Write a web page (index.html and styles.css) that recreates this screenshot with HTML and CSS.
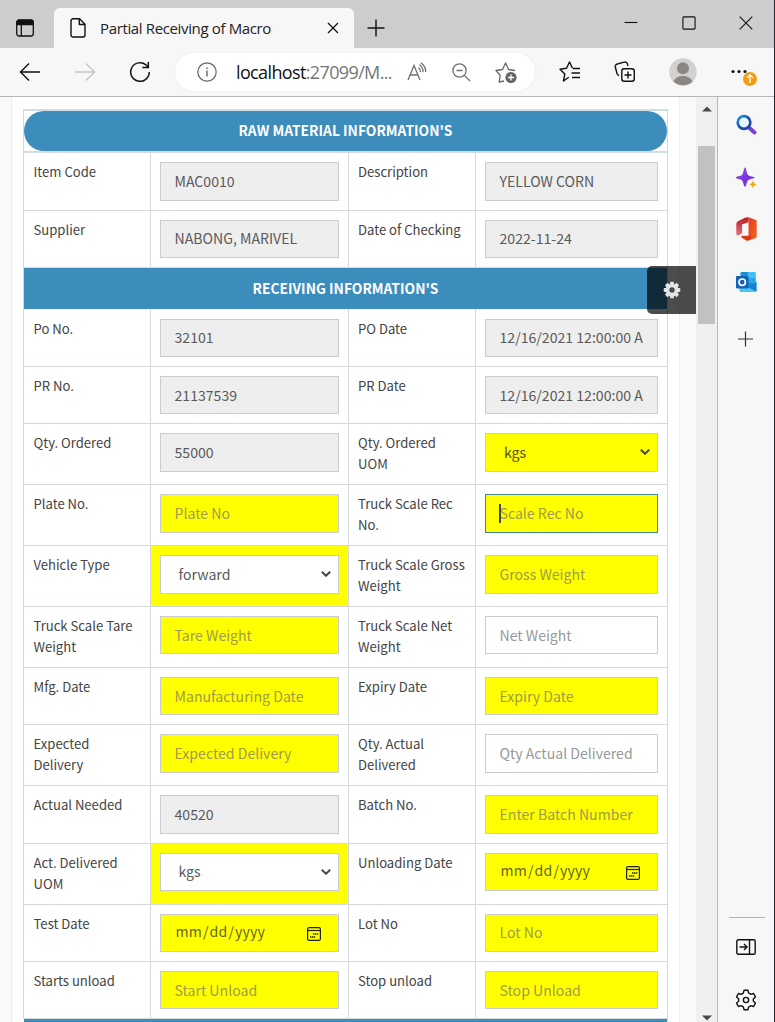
FILE: index.html
```html
<!DOCTYPE html>
<html lang="en">
<head>
<meta charset="utf-8">
<title>Partial Receiving of Macro</title>
<link rel="stylesheet" href="styles.css">
</head>
<body>
<div class="window">
  <header class="tabbar">
    <svg class="tabmenu" width="20" height="20" viewBox="0 0 20 20" fill="none" stroke="#111" stroke-width="1.3"><rect x="1.7" y="2" width="16.6" height="16" rx="2.5"/><path d="M2 4.5a2 2 0 0 1 2-2h12a2 2 0 0 1 2 2v2H2z" fill="#111"/><path d="M6.3 7v11"/></svg>
    <div class="tab">
      <svg width="16" height="20" viewBox="0 0 16 20" fill="none" stroke="#111" stroke-width="1.4" stroke-linejoin="round"><path d="M3 .8h6.5L15 6.3V17a2 2 0 0 1-2 2H3a2 2 0 0 1-2-2V2.8a2 2 0 0 1 2-2z"/><path d="M9.3 1v5.5H15"/></svg>
      <span class="tabtitle">Partial Receiving of Macro</span>
      <svg class="tabclose" width="12" height="12" viewBox="0 0 12 12" stroke="#111" stroke-width="1.3"><path d="M1 1l10 10M11 1L1 11"/></svg>
    </div>
    <svg class="newtab" width="18" height="18" viewBox="0 0 18 18" stroke="#111" stroke-width="1.4"><path d="M9 .5v17M.5 9h17"/></svg>
    <div class="winbtns">
      <svg width="14" height="14" viewBox="0 0 14 14" stroke="#111" stroke-width="1.1"><path d="M.5 6.5h13"/></svg>
      <svg width="14" height="14" viewBox="0 0 14 14" fill="none" stroke="#111" stroke-width="1.1"><rect x=".9" y=".9" width="12.2" height="12.2" rx="1"/></svg>
      <svg width="14" height="14" viewBox="0 0 14 14" stroke="#111" stroke-width="1.1"><path d="M.7.7l12.6 12.6M13.3.7L.7 13.3"/></svg>
    </div>
  </header>
  <div class="toolbar">
    <svg width="22" height="20" viewBox="0 0 22 20" fill="none" stroke="#111" stroke-width="1.4"><path d="M21 10H1.500M10 1.500L1.500 10l8.500 8.500"/></svg>
    <svg class="fwd" width="22" height="20" viewBox="0 0 22 20" fill="none" stroke="#c8c8c8" stroke-width="1.4"><path d="M1 10h19.500M12 1.500L20.500 10 12 18.500"/></svg>
    <svg class="reload" width="22" height="22" viewBox="0 0 22 22" fill="none" stroke="#111" stroke-width="1.5"><path d="M20.300 11a9.300 9.300 0 1 1-3.200-7L19 6"/><path d="M19.300 1v5.500h-6"/></svg>
    <div class="address">
      <svg width="20" height="20" viewBox="0 0 20 20" fill="none" stroke="#666" stroke-width="1.200"><circle cx="10" cy="10" r="9.200"/><path d="M10 8.500v6M10 5.500v1.600" stroke-width="1.400"/></svg>
      <span class="url">localhost<span class="dim">:27099/M...</span></span>
      <svg class="read" width="20" height="20" viewBox="0 0 20 20" fill="none" stroke="#707070" stroke-width="1.300"><path d="M1 18L7 3.500 13 18M3 13h8M11.500 5.500a6 6 0 0 1 2 4.500M12.500 2.500a9 9 0 0 1 3.500 7.500M14 .7a12 12 0 0 1 4.800 9.300"/></svg>
      <svg class="zoomout" width="19" height="19" viewBox="0 0 19 19" fill="none" stroke="#707070" stroke-width="1.300"><circle cx="7.500" cy="7.500" r="6.600"/><path d="M12.500 12.500L18 18M4.500 7.500h6"/></svg>
      <svg class="fav" width="23" height="23" viewBox="0 0 23 23" fill="none" stroke="#666" stroke-width="1.300" stroke-linejoin="round"><path d="M9 20l-4.800 1 1-6.800L1 9.500l6.500-1L10.600 2l3 6.500 6.400 1"/><circle cx="16" cy="16.500" r="5.600" fill="#666" stroke="none"/><path d="M16 13.500v6M13 16.500h6" stroke="#fff"/></svg>
    </div>
    <svg class="favs" width="22" height="22" viewBox="0 0 22 22" fill="none" stroke="#111" stroke-width="1.400" stroke-linejoin="round"><path d="M9.800 16.200L4.500 20l1.300-7L1 8.300l6.500-1L10.500 1l3 6.300M14 7.500h7M12.500 12H21M13 16.500h8"/></svg>
    <svg class="coll" width="22" height="22" viewBox="0 0 22 22" fill="none" stroke="#111" stroke-width="1.400"><rect x="7.800" y="7.800" width="12.500" height="12.500" rx="2.500"/><path d="M14 10.500v7M10.500 14h7M5 14.500a3 3 0 0 1-2-2L1.300 6a2.500 2.500 0 0 1 2-3L10 1.200a2.500 2.500 0 0 1 3.500 2L14 5"/></svg>
    <svg class="avatar" width="28" height="28" viewBox="0 0 28 28"><circle cx="14" cy="14" r="13.700" fill="#d3d1cf"/><circle cx="14" cy="10.300" r="6" fill="#898684"/><path d="M4.500 23.500C6 19.800 10 18 14 18s8 1.800 9.500 5.500A13.700 13.700 0 0 1 4.500 23.500z" fill="#898684"/></svg>
    <svg class="more" width="28" height="28" viewBox="0 0 28 28"><g fill="#111"><circle cx="3" cy="7.500" r="1.600"/><circle cx="9" cy="7.500" r="1.600"/><circle cx="15" cy="7.500" r="1.600"/></g><circle cx="20" cy="15" r="7" fill="#f09d13"/><path d="M20 19v-8M17 13.800l3-3 3 3" fill="none" stroke="#fff" stroke-width="1.300"/></svg>
  </div>
  <div class="body">
    <main class="page">
      <div class="panel">
        <div class="form">
          <div class="capwrap"><div class="caption">RAW MATERIAL INFORMATION'S</div></div>
          <div class="row h58 big"><div class="label">Item Code</div><div class="cell"><div class="field ro">MAC0010</div></div><div class="label">Description</div><div class="cell"><div class="field ro">YELLOW CORN</div></div></div>
          <div class="row"><div class="label">Supplier</div><div class="cell"><div class="field ro">NABONG, MARIVEL</div></div><div class="label">Date of Checking</div><div class="cell"><div class="field ro">2022-11-24</div></div></div>
          <div class="section">RECEIVING INFORMATION'S</div>
          <div class="row h58 first"><div class="label">Po No.</div><div class="cell"><div class="field ro">32101</div></div><div class="label">PO Date</div><div class="cell"><div class="field ro">12/16/2021 12:00:00 A</div></div></div>
          <div class="row low"><div class="label">PR No.</div><div class="cell"><div class="field ro">21137539</div></div><div class="label">PR Date</div><div class="cell"><div class="field ro">12/16/2021 12:00:00 A</div></div></div>
          <div class="row h61 big"><div class="label">Qty. Ordered</div><div class="cell"><div class="field ro">55000</div></div><div class="label">Qty. Ordered<br>UOM</div><div class="cell"><div class="field req select">kgs<svg class="chev" viewBox="0 0 10 6"><path d="M.8.8L5 4.800 9.200.8"/></svg></div></div></div>
          <div class="row h61 big"><div class="label">Plate No.</div><div class="cell"><div class="field req ph">Plate No</div></div><div class="label">Truck Scale Rec<br>No.</div><div class="cell"><div class="field req ph focus"><i class="caret"></i>Scale Rec No</div></div></div>
          <div class="row h61 big"><div class="label">Vehicle Type</div><div class="cell hot"><div class="field select">forward<svg class="chev" viewBox="0 0 10 6"><path d="M.8.8L5 4.800 9.200.8"/></svg></div></div><div class="label">Truck Scale Gross<br>Weight</div><div class="cell"><div class="field req ph">Gross Weight</div></div></div>
          <div class="row h61 low"><div class="label">Truck Scale Tare<br>Weight</div><div class="cell"><div class="field req ph">Tare Weight</div></div><div class="label">Truck Scale Net<br>Weight</div><div class="cell"><div class="field ph">Net Weight</div></div></div>
          <div class="row low"><div class="label">Mfg. Date</div><div class="cell"><div class="field req ph">Manufacturing Date</div></div><div class="label">Expiry Date</div><div class="cell"><div class="field req ph">Expiry Date</div></div></div>
          <div class="row h61 big"><div class="label">Expected<br>Delivery</div><div class="cell"><div class="field req ph">Expected Delivery</div></div><div class="label">Qty. Actual<br>Delivered</div><div class="cell"><div class="field ph">Qty Actual Delivered</div></div></div>
          <div class="row h58 big"><div class="label">Actual Needed</div><div class="cell"><div class="field ro">40520</div></div><div class="label">Batch No.</div><div class="cell"><div class="field req ph">Enter Batch Number</div></div></div>
          <div class="row h61"><div class="label">Act. Delivered<br>UOM</div><div class="cell hot"><div class="field select">kgs<svg class="chev" viewBox="0 0 10 6"><path d="M.8.8L5 4.800 9.200.8"/></svg></div></div><div class="label">Unloading Date</div><div class="cell"><div class="field req date"><span>mm<b>/</b>dd<b>/</b>yyyy</span><svg class="cal" viewBox="0 0 14 14"><rect x=".6" y=".6" width="12.800" height="12.800" rx="1.500"/><path d="M.6 3.500h12.800"/><path class="dots" d="M6 7h5.200M3 10h5.200"/></svg></div></div></div>
          <div class="row"><div class="label">Test Date</div><div class="cell"><div class="field req date"><span>mm<b>/</b>dd<b>/</b>yyyy</span><svg class="cal" viewBox="0 0 14 14"><rect x=".6" y=".6" width="12.800" height="12.800" rx="1.500"/><path d="M.6 3.500h12.800"/><path class="dots" d="M6 7h5.200M3 10h5.200"/></svg></div></div><div class="label">Lot No</div><div class="cell"><div class="field req ph">Lot No</div></div></div>
          <div class="row low"><div class="label">Starts unload</div><div class="cell"><div class="field req ph">Start Unload</div></div><div class="label">Stop unload</div><div class="cell"><div class="field req ph">Stop Unload</div></div></div>
          <div class="next"></div>
        </div>
      </div>
      <div class="settings"><svg width="18" height="18" viewBox="-9 -9 18 18"><g fill="#e2e5e7"><circle r="6.300"/><g><rect x="-1.900" y="-8.300" width="3.800" height="16.600" rx=".8"/><rect x="-8.300" y="-1.900" width="16.600" height="3.800" rx=".8"/></g><g transform="rotate(45)"><rect x="-1.900" y="-8.300" width="3.800" height="16.600" rx=".8"/><rect x="-8.300" y="-1.900" width="16.600" height="3.800" rx=".8"/></g></g><circle r="2.700" fill="#4a4a4a"/></svg></div>
    </main>
    <div class="scroll">
      <svg width="10" height="6" viewBox="0 0 10 6"><path d="M0 5.500L5 .5l5 5z" fill="#484848"/></svg>
      <div class="thumb"></div>
      <svg width="10" height="6" viewBox="0 0 10 6"><path d="M0 .5l5 5 5-5z" fill="#484848"/></svg>
    </div>
    <aside class="side">
      <svg class="s1" width="22" height="22" viewBox="0 0 22 22"><defs><linearGradient id="g1" x2="1" y2="1"><stop stop-color="#2b9be4"/><stop offset=".5" stop-color="#1652b5"/><stop offset="1" stop-color="#1746a4"/></linearGradient><linearGradient id="g2" x2="1" y2="1"><stop stop-color="#a259e8"/><stop offset=".5" stop-color="#7b35dc"/></linearGradient><linearGradient id="g3" y2="1" x2="1"><stop stop-color="#e33b25"/><stop offset="1" stop-color="#f06a1c"/></linearGradient><linearGradient id="g4" x2="0" y2="1"><stop stop-color="#b51f1e"/><stop offset="1" stop-color="#ef6d80"/></linearGradient></defs><path d="M14 14l5 4.500" stroke="#7a43cf" stroke-width="4" stroke-linecap="round"/><circle cx="8.500" cy="8.500" r="6.300" fill="#e8f6fd" stroke="url(#g1)" stroke-width="2.700"/></svg>
      <svg class="s2" width="22" height="22" viewBox="0 0 22 22"><path d="M9.500.5c1.300 0 1.600 6 3 7.500s6.500 1.500 6.500 2.600-5 1.400-6.500 2.800-1.700 6.300-3 6.300-1.500-5-3-6.300S.300 12 .3 10.600 5 9.500 6.500 8 8.200.5 9.500.5z" fill="url(#g2)"/><path d="M17.500 13c.6 3 1.200 3.600 4.200 4.500-3 .8-3.600 1.400-4.200 4.300-.7-2.900-1.300-3.500-4.200-4.300 2.900-.9 3.500-1.500 4.200-4.500z" fill="#e9ae16"/></svg>
      <svg class="s3" width="22" height="24" viewBox="0 0 22 24"><path d="M13 .3l7.500 2.800q.7.300.7 1.200v15.500q0 .8-.8 1.100L13 23.500z" fill="url(#g3)"/><path d="M13 .3v5L6.500 7.500v9L3 18.300Q.8 19 .8 16.800V7q0-1.800 1.600-2.700L9.500.7Q11.500 0 13 .3z" fill="url(#g4)"/><path d="M6.500 18.700h7l1.500-1 1 3.500-3 2.400q-1 .3-2.200-.2L6 20.500q-1-.9.5-1.800z" fill="#db3a1b"/></svg>
      <svg class="s4" width="22" height="21" viewBox="0 0 22 21"><rect x="5" y="0" width="15" height="17" rx="1.200" fill="#1b8edb"/><path d="M12.500 0H19q1 0 1 1v5h-7.500z" fill="#43bff2"/><path d="M12.500 6H20v5h-7.500z" fill="#2aa5e8"/><path d="M4 19V12l8 4 9-6.500V19q0 1-1 1H5q-1 0-1-1z" fill="#45c6f3"/><path d="M12 15l9 4.600V10z" fill="#1a80cc"/><rect x=".5" y="4" width="12.500" height="12.500" rx="1.200" fill="#1063b8"/><circle cx="6.700" cy="10.200" r="3.200" fill="none" stroke="#fff" stroke-width="1.700"/></svg>
      <svg class="s5" width="16" height="16" viewBox="0 0 16 16" stroke="#333" stroke-width="1.200"><path d="M8 .5v15M.5 8h15"/></svg>
      <div class="bottom">
        <svg width="20" height="16" viewBox="0 0 20 16" fill="none" stroke="#111" stroke-width="1.400"><rect x=".8" y=".8" width="18.400" height="14.400" rx="1.500"/><path d="M13.500 1v14M3.500 8h7M8 5l3 3-3 3"/></svg>
        <svg class="gear" width="22" height="22" viewBox="-11 -11 22 22" fill="none" stroke="#111" stroke-width="1.400" stroke-linejoin="round"><path d="M-1.900 -9.800H1.900L2.700 -6.900Q3.800 -6.500 4.700 -5.700L7.600 -6.500L9.500 -3.200L7.300 -1.100Q7.500 0 7.300 1.100L9.500 3.200L7.600 6.500L4.700 5.700Q3.800 6.500 2.700 6.900L1.900 9.800H-1.900L-2.700 6.900Q-3.800 6.500 -4.700 5.700L-7.600 6.500L-9.500 3.200L-7.300 1.100Q-7.500 0 -7.300 -1.100L-9.500 -3.200L-7.600 -6.500L-4.700 -5.700Q-3.800 -6.500 -2.700 -6.900z"/><circle r="2.600"/></svg>
      </div>
    </aside>
  </div>
</div>
</body>
</html>
```
FILE: styles.css
```css
* { box-sizing: border-box; }
body { margin: 0; background: #f7f7f7; font-family: "Noto Sans CJK SC", "Noto Sans", sans-serif; overflow: hidden; }
svg { display: block; flex: none; }
.window { width: 775px; height: 1022px; display: flex; flex-direction: column; border-right: 1px solid #23262b; overflow: hidden; }

.tabbar { height: 48px; flex: none; background: #cdcdcd; display: flex; align-items: flex-start; }
.tabmenu { margin: 18px 0 0 15px; }
.tab { width: 300px; height: 40px; margin: 8px 0 0 19px; background: #f7f7f7; border-radius: 6px 6px 0 0; display: flex; align-items: center; padding-left: 16px; }
.tabtitle { width: 171px; margin-left: 14px; font: 15px "Open Sans", sans-serif; letter-spacing: -.36px; color: #222; white-space: nowrap; }
.tabclose { margin-left: 56px; }
.newtab { margin: 19px 0 0 12.500px; }
.winbtns { display: flex; gap: 43.5px; margin: 16px 0 0 239.500px; }

.toolbar { height: 49px; flex: none; background: #f7f7f7; border-bottom: 1px solid #b9b7b5; display: flex; align-items: center; padding-left: 19px; }
.fwd { margin-left: 33px; }
.reload { margin-left: 33px; }
.address { width: 360px; height: 38px; margin-left: 24px; background: #fff; border-radius: 19px; display: flex; align-items: center; padding-left: 22px; box-shadow: 0 0 2px #e6e6e6; }
.url { width: 157px; margin-left: 19px; font: 18px "Open Sans", sans-serif; letter-spacing: -.63px; color: #111; white-space: nowrap; }
.dim { color: #767676; }
.read { margin-left: 14px; }
.zoomout { margin-left: 25px; }
.fav { margin-left: 24px; }
.favs { margin-left: 24px; }
.coll { margin-left: 33px; }
.avatar { margin-left: 33px; }
.more { margin-left: 33px; margin-top: 12px; }

.body { flex: 1; display: flex; min-height: 0; }
.page { width: 696px; position: relative; background: #f9f9f9; padding-left: 11px; overflow: hidden; }
.panel { width: 669px; height: 925px; background: #fff; border-left: 1px solid #ececec; border-right: 1px solid #f1f1f1; padding: 12px 0 0 11px; overflow: hidden; }
.form { width: 645px; border-right: 1px solid #d3d6da; }
.capwrap { height: 44px; border: solid #d0dde5; border-width: 2px 0 2px 1px; }
.caption, .section { color: #fff; background: #3c8dbc; font-size: 13.8px; font-weight: 700; text-align: center; line-height: 40px; }
.caption { height: 40px; border-radius: 20px; line-height: 39px; }
.section { height: 41px; border-left: 1px solid #d3d6da; }
.next { height: 20px; background: #3c8dbc; margin-left: 1px; }
.row { height: 57px; display: grid; grid-template-columns: 127px 198px 127px 192px; border-bottom: 1px solid #d5d8dc; }
.h58 { height: 58px; }
.h61 { height: 61px; }
.label, .cell { border-left: 1px solid #d5d8dc; padding: 9px 9px 0; }
.label { padding-top: 8px; font-size: 13.1px; line-height: 21px; color: #444; white-space: nowrap; }
.label:first-child { padding-left: 9.500px; }
.first .cell { padding-top: 10px; }
.first .label { padding-top: 9px; }
.hot { background: #ff0; }
.field { position: relative; height: 38px; border: 1px solid #c9ccd0; background: #fff; padding-left: 13.500px; font-size: 14.1px; line-height: 35px; color: #5a5a5a; white-space: nowrap; }
.big .field { height: 39px; line-height: 37px; }
.low .field { line-height: 36px; }
.ro { background: #eee; }
.req { background: #ff0; }
.ph { color: #999; }
.req.ph { color: #a09b4c; }
.focus { border-color: #3f8794; }
.caret { position: absolute; left: 13px; top: 9px; width: 1.5px; height: 19px; background: #444; }
.select, .date { display: flex; align-items: flex-start; justify-content: space-between; }
.select { padding: 0 7px 0 17.500px; }
.req.select { color: #55551e; padding-left: 18px; }
.chev { width: 10px; height: 6px; margin-top: 15px; fill: none; stroke: #444; stroke-width: 1.900; }
.row .date { padding: 0 17px 0 14.500px; letter-spacing: .15px; line-height: 33px; color: #66652c; }
.date b { font-weight: 400; margin: 0 1px; }
.cal { width: 14px; height: 14px; margin-top: 11.500px; fill: none; stroke: #222; stroke-width: 1.200; }
.dots { stroke-width: 1.400; stroke-dasharray: 1.400 .5; }
.settings { position: absolute; left: 647px; top: 169px; width: 49px; height: 48px; background: rgba(0, 0, 0, .7); border-radius: 5px 0 0 5px; display: flex; align-items: center; justify-content: center; }

.scroll { width: 22px; background: #f0f0f0; border-right: 1px solid #b9b7b5; padding: 9px 0 1px 2px; display: flex; flex-direction: column; }
.scroll svg { margin-left: 3.500px; }
.thumb { width: 17px; height: 178px; background: #c1c1c1; margin: 34px 0 auto; }

.side { flex: 1; background: #f7f7f7; padding: 17px 0 0 18px; display: flex; flex-direction: column; }
.side > svg { transform: translateX(-.5px); }
.s2 { margin-top: 31px; }
.s3 { margin-top: 28px; }
.s4 { margin-top: 31px; }
.s5 { margin: 38px 0 0 2px; }
.bottom { width: 36px; margin: auto 0 11px -7px; border-top: 1px solid #b5b5b5; padding: 21px 0 0 7px; }
.gear { margin: 34px 0 0 -1px; }
```
